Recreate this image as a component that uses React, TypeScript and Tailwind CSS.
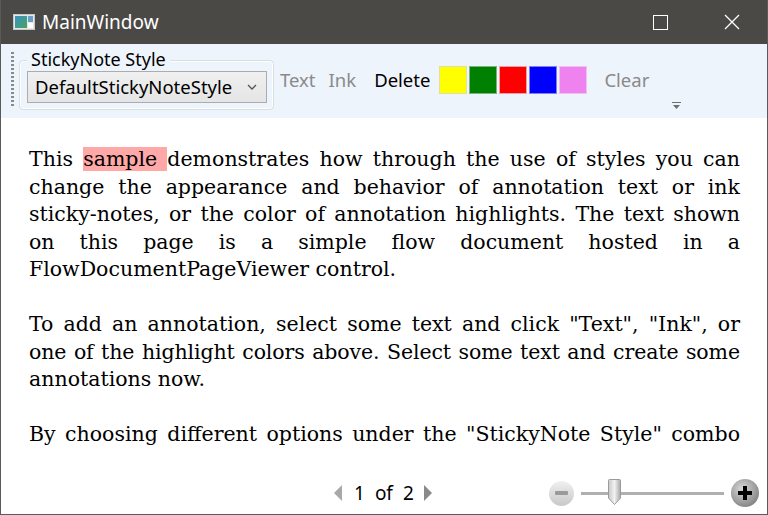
import React from "react";

const serif = { fontFamily: '"DejaVu Serif", Georgia, serif' };

function JLine({ children, last = false }: { children: React.ReactNode; last?: boolean }) {
  return (
    <div className={last ? "text-left whitespace-nowrap" : "text-justify [text-align-last:justify] whitespace-nowrap"}>
      {children}
    </div>
  );
}

export default function App() {
  return (
    <div
      className="w-[768px] h-[515px] flex flex-col bg-white border-x border-b border-[#5a5a5a] overflow-hidden"
      style={{ fontFamily: '"Noto Sans", "Open Sans", sans-serif' }}
    >
      {/* Title bar */}
      <div className="h-[44px] shrink-0 bg-[#4b4946] flex items-center text-white">
        <div className="ml-[12px] w-[22px] h-[16px] border border-[#c8c8c8] bg-[#e8e8e8] flex p-[1px]">
          <div className="w-[12px] h-full bg-gradient-to-br from-[#3d8ec2] to-[#4ba35a]" />
          <div className="flex-1 flex flex-col gap-[1px] pl-[1px]">
            <div className="h-[6px] bg-[#6aa0c8]" />
            <div className="flex-1 bg-white" />
          </div>
        </div>
        <span className="ml-[7px] text-[19px] leading-none">MainWindow</span>
        <div className="flex-1" />
        <div className="w-[15px] h-[15px] border-[1.5px] border-white mr-[56px]" />
        <svg width="16" height="16" viewBox="0 0 16 16" className="mr-[27px]">
          <path d="M1 1 L15 15 M15 1 L1 15" stroke="white" strokeWidth="1.3" />
        </svg>
      </div>

      {/* Toolbar */}
      <div className="h-[74px] shrink-0 bg-[#eef4fc] flex items-start relative">
        <div className="ml-[10px] mt-[8px] w-[3px] h-[54px] bg-[repeating-linear-gradient(to_bottom,#8a8a8a_0px,#8a8a8a_2px,transparent_2px,transparent_4px)]" />
        {/* Group box */}
        <div className="relative ml-[5px] mt-[16px] w-[255px] h-[50px] border border-[#d5dfe5] rounded-[4px] shadow-[inset_0_0_0_1px_white]">
          <span className="absolute left-[7px] top-[-13px] px-[4px] bg-[#eef4fc] text-[18px] leading-[22px] text-black">
            StickyNote Style
          </span>
          <div className="absolute left-[7px] top-[10px] w-[240px] h-[32px] border border-[#acacac] bg-gradient-to-b from-[#f0f0f0] to-[#e5e5e5] flex items-center">
            <span className="ml-[7px] text-[18.5px] text-black leading-none">DefaultStickyNoteStyle</span>
            <div className="flex-1" />
            <svg width="10" height="6" viewBox="0 0 10 6" className="mr-[9px]">
              <path d="M1 1 L5 5 L9 1" stroke="#555" strokeWidth="1.3" fill="none" />
            </svg>
          </div>
        </div>
        <div className="ml-[6px] mt-[22px] flex items-center h-[28px] text-[18.5px] leading-none">
          <span className="text-[#8a8a8a]">Text</span>
          <span className="ml-[13px] text-[#8a8a8a]">Ink</span>
          <span className="ml-[18px] text-black">Delete</span>
          <div className="ml-[9px] flex gap-[2px]">
            <div className="w-[28px] h-[28px] bg-[#ffff00] border border-[#e0e0a0]" />
            <div className="w-[28px] h-[28px] bg-[#008000] border border-[#7fb07f]" />
            <div className="w-[28px] h-[28px] bg-[#ff0000] border border-[#f0a0a0]" />
            <div className="w-[28px] h-[28px] bg-[#0000ff] border border-[#8080f0]" />
            <div className="w-[28px] h-[28px] bg-[#ee82ee] border border-[#f0c0f0]" />
          </div>
          <span className="ml-[17px] text-[#8a8a8a]">Clear</span>
        </div>
        <svg width="9" height="8" viewBox="0 0 9 8" className="absolute left-[671px] top-[58px]">
          <path d="M0 0.5 H9" stroke="#707070" strokeWidth="1" />
          <path d="M1 3 H8 L4.5 7 Z" fill="#707070" />
        </svg>
      </div>

      {/* Document */}
      <div className="flex-1 flex flex-col">
        <div className="mt-[28px] ml-[28px] w-[711px] text-[20.5px] leading-[27.5px] text-black" style={serif}>
          <JLine>
            This <span className="bg-[#ffa8a8]">sample </span>demonstrates how through the use of styles you can
          </JLine>
          <JLine>change the appearance and behavior of annotation text or ink</JLine>
          <JLine>sticky-notes, or the color of annotation highlights. The text shown</JLine>
          <JLine>on this page is a simple flow document hosted in a</JLine>
          <JLine last>FlowDocumentPageViewer control.</JLine>
          <div className="h-[27.5px]" />
          <JLine>To add an annotation, select some text and click "Text", "Ink", or</JLine>
          <JLine>
            <span className="tracking-[-0.1px]">one of the highlight colors above. Select some text and create some</span>
          </JLine>
          <JLine last>annotations now.</JLine>
          <div className="h-[27.5px]" />
          <JLine>By choosing different options under the "StickyNote Style" combo</JLine>
        </div>
        <div className="flex-1" />
        {/* Bottom bar */}
        <div className="h-[42px] flex items-center relative">
          <div className="absolute left-[332px] top-[8px] flex items-center h-[26px] text-[19px] text-black leading-none">
            <svg width="10" height="16" viewBox="0 0 10 16">
              <path d="M9 0 L9 16 L1 8 Z" fill="#a8a8a8" />
            </svg>
            <span className="ml-[11px]">1</span>
            <span className="ml-[10px]">of</span>
            <span className="ml-[10px]">2</span>
            <svg width="10" height="16" viewBox="0 0 10 16" className="ml-[9px]">
              <path d="M1 0 L1 16 L9 8 Z" fill="#8a8a8a" />
            </svg>
          </div>
          {/* zoom */}
          <div className="absolute left-[548px] top-[7px] flex items-center h-[28px]">
            <div className="w-[25px] h-[25px] rounded-full bg-gradient-to-b from-[#f0f0f0] to-[#c8c8c8] flex items-center justify-center">
              <div className="w-[13px] h-[4px] bg-[#9a9a9a] rounded-[1px]" />
            </div>
            <div className="relative ml-[7px] w-[143px] h-[3px] bg-[#b0b0b0]">
              <svg width="15" height="27" viewBox="0 0 15 27" className="absolute left-[26px] top-[-13px]">
                <defs>
                  <linearGradient id="tg" x1="0" y1="0" x2="1" y2="0">
                    <stop offset="0" stopColor="#c8c8c8" />
                    <stop offset="0.5" stopColor="#f2f2f2" />
                    <stop offset="1" stopColor="#a8a8a8" />
                  </linearGradient>
                </defs>
                <path d="M1.5 1.5 Q1.5 0.5 2.5 0.5 H12.5 Q13.5 0.5 13.5 1.5 V19 L7.5 25.5 L1.5 19 Z" fill="url(#tg)" stroke="#9a9a9a" strokeWidth="1" />
              </svg>
            </div>
            <div className="ml-[7px] w-[28px] h-[28px] rounded-full bg-[radial-gradient(circle_at_40%_35%,#d8d8d8,#6a6a6a)] flex items-center justify-center">
              <svg width="18" height="18" viewBox="0 0 18 18">
                <path d="M9 2 V16 M2 9 H16" stroke="black" strokeWidth="4" />
              </svg>
            </div>
          </div>
        </div>
      </div>
    </div>
  );
}
